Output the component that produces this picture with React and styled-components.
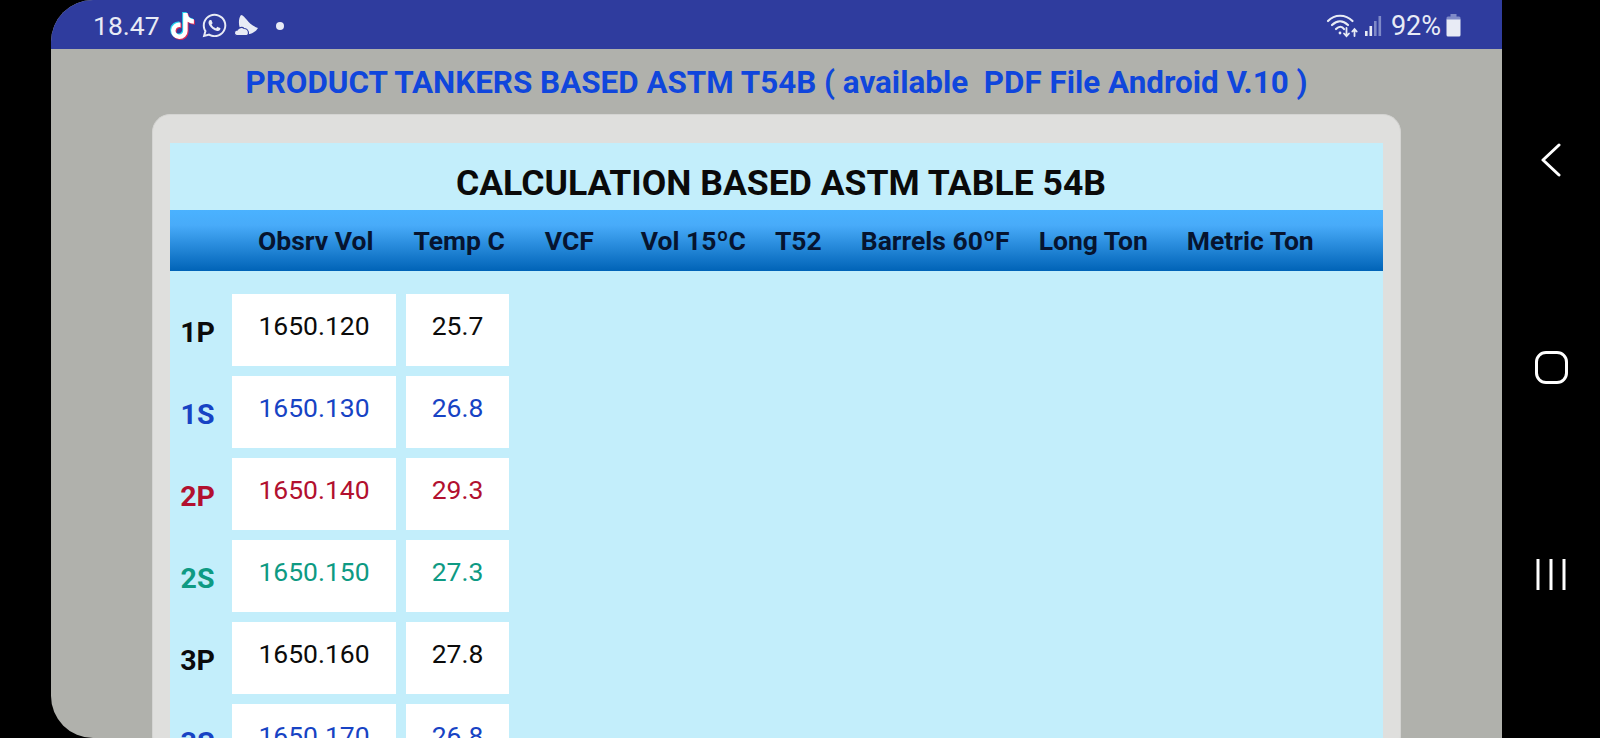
import React from "react";
import styled, { createGlobalStyle } from "styled-components";
import { FaTiktok, FaWhatsapp } from "react-icons/fa";

const columns = [
    { name: "Obsrv Vol", left: 88 },
    { name: "Temp C", left: 40 },
    { name: "VCF", left: 40 },
    { name: "Vol 15ºC", left: 47 },
    { name: "T52", left: 29 },
    { name: "Barrels 60ºF", left: 39 },
    { name: "Long Ton", left: 29 },
    { name: "Metric Ton", left: 39 },
];

const tanks = [
    { name: "1P", vol: "1650.120", temp: "25.7", color: "#0b0b0b" },
    { name: "1S", vol: "1650.130", temp: "26.8", color: "#1743c4" },
    { name: "2P", vol: "1650.140", temp: "29.3", color: "#b2102f" },
    { name: "2S", vol: "1650.150", temp: "27.3", color: "#0e9a83" },
    { name: "3P", vol: "1650.160", temp: "27.8", color: "#0b0b0b" },
    { name: "3S", vol: "1650.170", temp: "26.8", color: "#1743c4" },
];

function MoonIcon() {
    return (
        <svg width="24" height="21" viewBox="0 0 24 21" fill="#e8ebf5">
            <path d="M7 0C12 1 13 9 24 13 21 18 16 20 11 19 5 17 3 5 7 0z" />
            <path d="M3 20.500c-3.500 0-3.500-5.500 .5-5.500 .5-2.500 5-3.500 6.500-1.500 2.500 0 4.500 2 4.500 4.500 0 1.500-1 2.500-2 2.500z" stroke="#2f3c9e" strokeWidth="1.200" />
        </svg>
    );
}

function WifiIcon() {
    return (
        <svg width="33" height="25" viewBox="0 0 32 25" fill="none" stroke="#e8ebf5" strokeLinecap="round">
            <path d="M1.500 8C8 1 19 1 26 8" strokeWidth="2.200" />
            <path d="M5.500 12c5-5 11-5 16 0" strokeWidth="2.200" />
            <path d="M9.500 16c3-3 6-3 8 0" strokeWidth="2.200" />
            <circle cx="13.500" cy="20" r="1.400" fill="#e8ebf5" stroke="none" />
            <path d="M20 15v8M17.500 20.500l2.500 2.700 2.500-2.700" strokeWidth="1.800" />
            <path d="M28 23v-7M25.800 18.500l2.200-2.500 2.200 2.500" strokeWidth="1.800" />
        </svg>
    );
}

function SignalIcon() {
    return (
        <svg width="17" height="22" viewBox="0 0 17 22">
            <rect x="0" y="16" width="2.600" height="5" fill="#e8ebf5" />
            <rect x="4.500" y="11" width="2.600" height="10" fill="#e8ebf5" />
            <rect x="9" y="6" width="2.600" height="15" fill="#7f8ac8" />
            <rect x="13.500" y="1" width="2.600" height="20" fill="#7f8ac8" />
        </svg>
    );
}

function BatteryIcon() {
    return (
        <svg width="15" height="23" viewBox="0 0 15 23">
            <path d="M4.500 0h6v3h-6z" fill="#7f8ac8" />
            <path d="M2 2.500h11a1.500 1.500 0 0 1 1.500 1.500v2h-14V4A1.500 1.500 0 0 1 2 2.500z" fill="#7f8ac8" />
            <path d="M.5 5.500h14V21a1.500 1.500 0 0 1-1.500 1.500H2A1.500 1.500 0 0 1 .5 21z" fill="#e8ebf5" />
        </svg>
    );
}

function BackIcon() {
    return (
        <svg width="32" height="34" viewBox="0 0 32 34" fill="none" stroke="#fff" strokeWidth="3" strokeLinecap="round" strokeLinejoin="round">
            <path d="M24 2 8 17l16 15" />
        </svg>
    );
}

function RecentsIcon() {
    return (
        <svg width="32" height="32" viewBox="0 0 32 32" stroke="#fff" strokeWidth="3">
            <path d="M3 1v31M16 1v31M29 1v31" />
        </svg>
    );
}

export default function App() {
    return (
        <>
            <GlobalStyle />
            <Page>
                <Screen>
                    <StatusBar>
                        <StatusGroup>
                            <Clock>18.47</Clock>
                            <TikTokIcon />
                            <WhatsappIcon />
                            <MoonIcon />
                            <Dot />
                        </StatusGroup>
                        <StatusGroup>
                            <WifiIcon />
                            <SignalIcon />
                            <Percent>92%</Percent>
                            <BatteryIcon />
                        </StatusGroup>
                    </StatusBar>
                    <Title>PRODUCT TANKERS BASED ASTM T54B ( available  PDF File Android V.10 )</Title>
                    <Card>
                        <Panel>
                            <Heading>CALCULATION BASED ASTM TABLE 54B</Heading>
                            <HeaderBar>
                                {columns.map((c) => (
                                    <HeaderCell key={c.name} $left={c.left}>{c.name}</HeaderCell>
                                ))}
                            </HeaderBar>
                            <Rows>
                                {tanks.map((t) => (
                                    <Row key={t.name} $color={t.color}>
                                        <TankName>{t.name}</TankName>
                                        <VolCell>{t.vol}</VolCell>
                                        <TempCell>{t.temp}</TempCell>
                                    </Row>
                                ))}
                            </Rows>
                        </Panel>
                    </Card>
                </Screen>
                <NavBar>
                    <BackIcon />
                    <HomeButton />
                    <RecentsIcon />
                </NavBar>
            </Page>
        </>
    );
}

const GlobalStyle = createGlobalStyle`
html, body {
    margin: 0;
    padding: 0;
    background: #000;
    overflow: hidden;
}
* {
    box-sizing: border-box;
}
`
const Page = styled.div`
display: flex;
width: 1600px;
height: 738px;
padding-left: 51px;
background: #000;
font-family: Roboto, "Liberation Sans", sans-serif;
overflow: hidden;
`
const Screen = styled.div`
display: flex;
flex-direction: column;
align-items: center;
width: 1451px;
height: 738px;
background: #b0b1ac;
border-radius: 42px 0 0 42px;
overflow: hidden;
`
const StatusBar = styled.div`
display: flex;
flex: none;
align-items: center;
justify-content: space-between;
width: 100%;
height: 49px;
padding: 2px 41px 0 42px;
background: #2f3c9e;
color: #e8ebf5;
`
const StatusGroup = styled.div`
display: flex;
align-items: center;
gap: 6px;
`
const Clock = styled.span`
font-size: 26.5px;
margin-right: 5px;
`
const Percent = styled.span`
font-size: 27px;
margin-left: 3px;
margin-right: -1px;
`
const TikTokIcon = styled(FaTiktok)`
width: 23px;
height: 26px;
color: #fff;
filter: drop-shadow(-1px -1px 0 #25d4ee) drop-shadow(1px 1px 0 #e02c55);
margin-right: 1px;
`
const WhatsappIcon = styled(FaWhatsapp)`
width: 27px;
height: 27px;
color: #e8ebf5;
`
const Dot = styled.span`
width: 8px;
height: 8px;
margin-left: 12px;
border-radius: 50%;
background: #e8ebf5;
`
const Title = styled.div`
flex: none;
height: 65px;
padding-top: 15px;
font-size: 31.4px;
line-height: 38px;
font-weight: 700;
color: #1046dc;
white-space: pre;
`
const Card = styled.div`
flex: none;
width: 1249px;
height: 640px;
padding: 28px 17px 0 17px;
background: #dfdfdd;
border: 1px solid #d4d4d2;
border-radius: 18px;
`
const Panel = styled.div`
height: 100%;
background: #c3eefb;
`
const Heading = styled.div`
height: 67px;
padding: 20px 0 0 9px;
text-align: center;
font-size: 35.6px;
line-height: 40px;
font-weight: 700;
color: #0a0a0a;
`
const HeaderBar = styled.div`
display: flex;
align-items: center;
height: 61px;
background: linear-gradient(#4ab2ff, #48abf9 25%, #0063b7);
`
const HeaderCell = styled.div`
margin-left: ${(p) => p.$left}px;
font-size: 26.5px;
font-weight: 700;
color: #06142f;
white-space: nowrap;
`
const Rows = styled.div`
display: flex;
flex-direction: column;
gap: 10px;
padding-top: 23px;
`
const Row = styled.div`
display: flex;
flex: none;
gap: 10px;
height: 72px;
color: ${(p) => p.$color};
`
const TankName = styled.div`
display: flex;
align-items: center;
justify-content: center;
width: 52px;
font-size: 28.5px;
font-weight: 700;
padding: 5px 0 0 3px;
`
const VolCell = styled.div`
width: 164px;
padding-top: 15px;
background: #fff;
text-align: center;
font-size: 26.5px;
line-height: 34px;
`
const TempCell = styled(VolCell)`
width: 103px;
`
const NavBar = styled.div`
display: flex;
flex: 1;
flex-direction: column;
align-items: center;
justify-content: center;
gap: 174px;
padding-bottom: 6px;
`
const HomeButton = styled.div`
width: 33px;
height: 33px;
border: 3px solid #fff;
border-radius: 11px;
`
